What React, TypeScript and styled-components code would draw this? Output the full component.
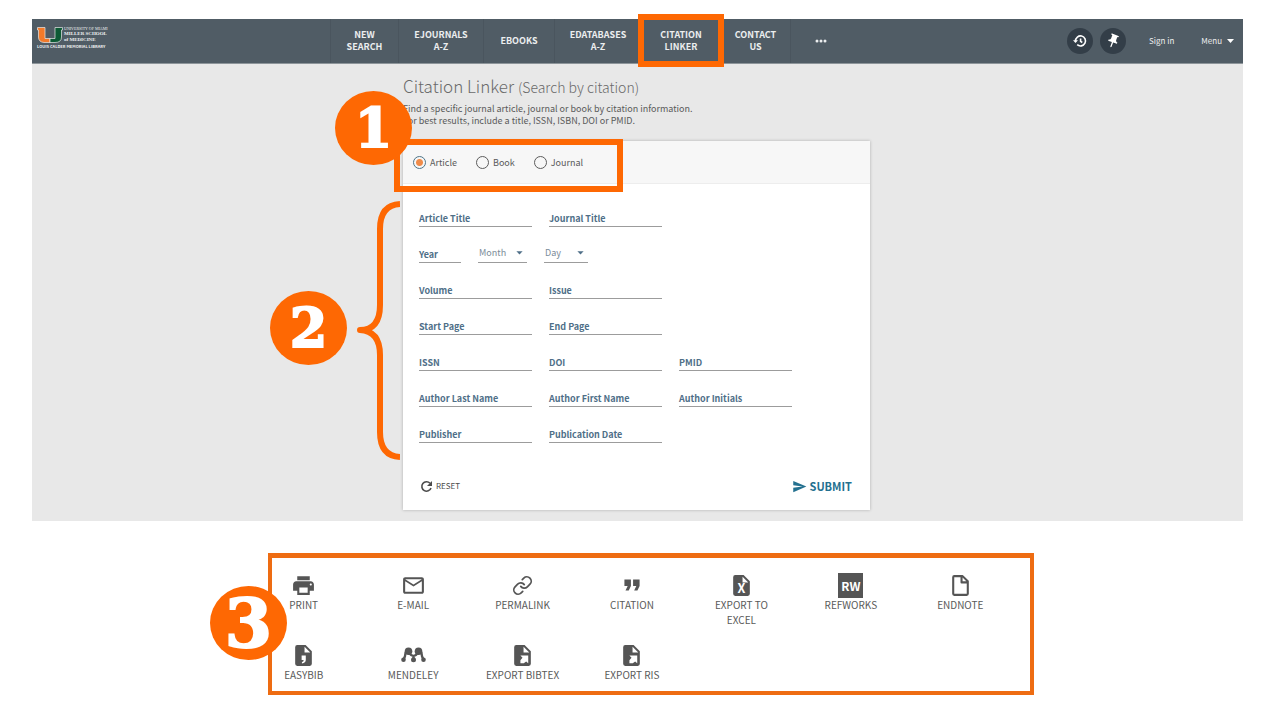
import React from "react";
import styled, { createGlobalStyle } from "styled-components";
import { Link as ChainLink } from "lucide-react";
import {
  MdArrowDropDown,
  MdFormatQuote,
  MdMailOutline,
  MdPrint,
  MdPushPin,
  MdSend,
} from "react-icons/md";

const ORANGE = "#fe6803";

const GlobalStyle = createGlobalStyle`
  * { box-sizing: border-box; }
  body {
    margin: 0;
    background: #fff;
    font-family: "Noto Sans CJK SC", "Open Sans", sans-serif;
    color: #5a5a5a;
  }
  button, input, select { font-family: inherit; border: 0; padding: 0; background: none; border-radius: 0; }
  svg { display: block; }
`;

const Page = styled.div`
  padding: 19px 31px 0 32px;
`;

const Screen = styled.div`
  background: #e8e8e8;
  padding-bottom: 11px;
`;

const Header = styled.header`
  display: flex;
  height: 45px;
  background: #505c65;
  border-bottom: 1px solid #8d959a;
`;

const Logo = styled.a`
  display: flex;
  flex-direction: column;
  width: 298px;
  padding: 8px 0 0 5px;
  color: #eef0f1;
  text-decoration: none;
`;

const LogoTop = styled.span`
  display: flex;
  gap: 1px;
`;

const LogoWords = styled.span`
  display: flex;
  flex-direction: column;
  font-family: "Liberation Serif", serif;
  white-space: nowrap;
`;

const LogoLine = styled.span<{ $size: number; $line: number }>`
  font-size: ${(p) => p.$size}px;
  line-height: ${(p) => p.$line}px;
`;

const LogoLibrary = styled.span`
  font-size: 4px;
  font-weight: 700;
  line-height: 6px;
  white-space: nowrap;
`;

const Nav = styled.nav`
  display: flex;
  border-left: 1px solid #4a555e;
`;

const NavLink = styled.a<{ $width: number }>`
  position: relative;
  display: flex;
  align-items: center;
  justify-content: center;
  width: ${(p) => p.$width}px;
  border-right: 1px solid #4a555e;
  color: #eceeef;
  font-size: 9px;
  font-weight: 700;
  line-height: 12px;
  text-align: center;
  text-decoration: none;
  white-space: pre-line;

  &:last-child { border-right: 0; }
`;

const NavHighlight = styled.span`
  position: absolute;
  inset: -5px -4px -4px -4px;
  border: 6px solid ${ORANGE};
  z-index: 1;
`;

const Account = styled.div`
  display: flex;
  align-items: center;
  margin-left: auto;
  padding-right: 9px;
`;

const RoundButton = styled.button`
  display: flex;
  align-items: center;
  justify-content: center;
  width: 26px;
  height: 26px;
  margin-right: 7px;
  border-radius: 50%;
  background: #333e48;
  color: #fff;
`;

const AccountButton = styled.button`
  display: flex;
  align-items: center;
  gap: 5px;
  margin-left: 16px;
  color: #eceeef;
  font-size: 8px;
  line-height: 12px;

  & + & { margin-left: 27px; }
`;

const Main = styled.main`
  width: 469px;
  max-width: 100%;
  margin: 0 auto;
  padding-right: 2px;
`;

const Title = styled.h1`
  margin: 0;
  padding-top: 10px;
  color: #6a6a6a;
  font-size: 17px;
  font-weight: 300;
  line-height: 24px;

  small { font-size: 14px; }
`;

const Intro = styled.p`
  margin: 4px 0 14px;
  font-size: 9px;
  line-height: 12px;
`;

const Card = styled.form`
  position: relative;
  background: #fff;
  box-shadow: 0 0 3px rgba(0, 0, 0, 0.25);
`;

const Types = styled.div`
  display: flex;
  align-items: center;
  gap: 19px;
  height: 43px;
  padding: 1px 0 0 10px;
  background: #f7f7f7;
  border-bottom: 1px solid #ededed;
`;

const TypeOption = styled.label`
  display: flex;
  align-items: center;
  gap: 4px;
  font-size: 9px;
  line-height: 12px;
`;

const Radio = styled.input`
  appearance: none;
  width: 13px;
  height: 13px;
  margin: 0;
  border: 1px solid #5c5c5c;
  border-radius: 50%;

  &:checked {
    border-color: #4d7488;
    background: radial-gradient(circle, #f08c4a 0 3px, transparent 4px);
  }
`;

const Rows = styled.div`
  display: flex;
  flex-direction: column;
  gap: 16px;
  padding: 23px 16px 0;
`;

const Row = styled.div`
  display: flex;
  gap: 17px;
`;

const Field = styled.div<{ $width?: number }>`
  display: grid;
  width: ${(p) => p.$width ?? 113}px;
  height: 20px;
  border-bottom: 1px solid #9c9c9c;

  & > * { grid-area: 1 / 1; min-width: 0; }
`;

const FieldLabel = styled.label`
  color: #4f6f88;
  font-size: 9px;
  font-weight: 700;
  line-height: 24px;
  white-space: nowrap;
`;

const TextInput = styled.input`
  width: 100%;
  font-size: 9px;
  outline: 0;
`;

const Select = styled.select`
  appearance: none;
  width: 100%;
  height: 20px;
  padding-left: 1px;
  color: #7b8b99;
  font-size: 9px;
  line-height: 20px;
`;

const Caret = styled(MdArrowDropDown)`
  justify-self: end;
  margin-top: 2px;
  color: #4f6f88;
  pointer-events: none;
`;

const Actions = styled.div`
  display: flex;
  align-items: center;
  justify-content: space-between;
  padding: 35px 18px 16px 17px;
`;

const ActionButton = styled.button<{ $primary?: boolean }>`
  display: flex;
  align-items: center;
  gap: 3px;
  color: ${(p) => (p.$primary ? "#23708f" : "#4c4c4c")};
  font-size: ${(p) => (p.$primary ? 11 : 8)}px;
  font-weight: ${(p) => (p.$primary ? 700 : 400)};
  line-height: 16px;
`;

const TypesHighlight = styled.div`
  position: absolute;
  left: -9px;
  top: -2px;
  width: 229px;
  height: 53px;
  border: 6px solid ${ORANGE};
  pointer-events: none;
`;

const Brace = styled.svg`
  position: absolute;
  left: -46px;
  top: 59px;
`;

const Step = styled.div<{ $left: number; $top: number; $size?: number }>`
  position: absolute;
  left: ${(p) => p.$left}px;
  top: ${(p) => p.$top}px;
  display: flex;
  align-items: center;
  justify-content: center;
  width: 77px;
  height: 74px;
  border-radius: 50%;
  background: ${ORANGE};
  color: #fff;
  font: bold ${(p) => p.$size ?? 54}px/74px "DejaVu Serif", serif;
  -webkit-text-stroke: 2px #fff;
`;

const ToolsArea = styled.section`
  display: flex;
  justify-content: center;
  padding: 32px 0 0 28px;
`;

const ToolsBox = styled.div`
  position: relative;
  width: 766px;
  border: 4px solid #ee6c12;
  border-top-width: 5px;
`;

const Tools = styled.div`
  display: grid;
  grid-template-columns: repeat(7, 1fr);
  grid-auto-rows: 70px 48px;
  margin: 15px 15px 0 -23px;
`;

const Tool = styled.button`
  display: flex;
  flex-direction: column;
  align-items: center;
  justify-content: flex-start;
  padding: 0 16px;
  color: #5a5a5a;
  font-size: 10px;
  line-height: 15px;
`;

const ToolIcon = styled.span`
  display: flex;
  align-items: center;
  justify-content: center;
  height: 24px;
  color: #555;
`;

const RefWorks = styled.span`
  width: 25px;
  height: 25px;
  background: #555;
  color: #fff;
  font-size: 12px;
  font-weight: 700;
  line-height: 25px;
`;

function FileIcon({ children }: { children: React.ReactNode }) {
  return (
    <svg width="25" height="25" viewBox="0 0 24 24" fill="currentColor">
      <path d="M14 2H6a2 2 0 0 0-2 2v16a2 2 0 0 0 2 2h12a2 2 0 0 0 2-2V8zm-1 7V3.500L18.500 9z" />
      {children}
    </svg>
  );
}

const ExportIcon = () => (
  <FileIcon>
    <path fill="#fff" d="M10 12H17.500V19.500L15.500 17.700L13.200 19.500H10V16.500L12 14.200z" />
  </FileIcon>
);

const EndNoteIcon = () => (
  <svg width="25" height="25" viewBox="0 0 24 24" fill="none" stroke="currentColor" strokeWidth="2" strokeLinejoin="round">
    <path d="M14 3H6Q5 3 5 4V20Q5 21 6 21H18Q19 21 19 20V8zM13 3V9H19" />
  </svg>
);

const MendeleyIcon = () => (
  <svg width="25" height="16" viewBox="0 0 25 16" fill="currentColor">
    <circle cx="7.500" cy="4.300" r="3.800" />
    <circle cx="17.500" cy="4.300" r="3.800" />
    <circle cx="2.500" cy="12.700" r="2.300" />
    <circle cx="12.500" cy="12.700" r="2.500" />
    <circle cx="22.500" cy="12.700" r="2.300" />
    <path
      d="M2.500 12.500Q4.300 10 4.700 5M12.500 12.500V9.500M22.500 12.500Q20.700 10 20.300 5M8.500 6.500Q12.500 11.500 16.500 6.500"
      fill="none"
      stroke="currentColor"
      strokeWidth="2.400"
    />
  </svg>
);

const MoreIcon = () => (
  <svg width="12" height="4" viewBox="0 0 12 4" fill="currentColor">
    <circle cx="2" cy="2" r="1.500" />
    <circle cx="6" cy="2" r="1.500" />
    <circle cx="10" cy="2" r="1.500" />
  </svg>
);

const HistoryIcon = () => (
  <svg width="14" height="14" viewBox="0 0 14 14" fill="none" stroke="currentColor" strokeWidth="1.600">
    <path d="M2.500 7A5 5 0 1 1 4.200 10.700M7.600 4.500V7.400L9.300 8.500" />
    <path d="M0 6.300H5L2.500 9z" fill="currentColor" stroke="none" />
  </svg>
);

const ResetIcon = () => (
  <svg width="13" height="13" viewBox="0 0 13 13" fill="none" stroke="currentColor" strokeWidth="1.600">
    <path d="M10 3.300A4.700 4.700 0 1 0 11 8" />
    <path d="M12 1V6H7z" fill="currentColor" stroke="none" />
  </svg>
);

const navItems = [
  { text: "NEW\nSEARCH", width: 68 },
  { text: "EJOURNALS\nA-Z", width: 85 },
  { text: "EBOOKS", width: 71 },
  { text: "EDATABASES\nA-Z", width: 87 },
  { text: "CITATION\nLINKER", width: 79, highlighted: true },
  { text: "CONTACT\nUS", width: 70 },
];

const rowsBelowDate = [
  ["Volume", "Issue"],
  ["Start Page", "End Page"],
  ["ISSN", "DOI", "PMID"],
  ["Author Last Name", "Author First Name", "Author Initials"],
  ["Publisher", "Publication Date"],
];

const tools = [
  { label: "PRINT", icon: <MdPrint size={25} /> },
  { label: "E-MAIL", icon: <MdMailOutline size={25} /> },
  { label: "PERMALINK", icon: <ChainLink size={21} strokeWidth={2} /> },
  { label: "CITATION", icon: <MdFormatQuote size={26} /> },
  {
    label: "EXPORT TO EXCEL",
    icon: (
      <FileIcon>
        <text x="12" y="19.500" fill="#fff" fontSize="12" fontWeight="700" textAnchor="middle">
          X
        </text>
      </FileIcon>
    ),
  },
  { label: "REFWORKS", icon: <RefWorks>RW</RefWorks> },
  { label: "ENDNOTE", icon: <EndNoteIcon /> },
  {
    label: "EASYBIB",
    icon: (
      <FileIcon>
        <path fill="#fff" d="M10.200 12h4v4.300q0 2.700-3.700 3.300v-1.300q1.600-.500 1.700-2.100h-2z" />
      </FileIcon>
    ),
  },
  { label: "MENDELEY", icon: <MendeleyIcon /> },
  { label: "EXPORT BIBTEX", icon: <ExportIcon /> },
  { label: "EXPORT RIS", icon: <ExportIcon /> },
];

function LabeledField({ label, width }: { label: string; width?: number }) {
  const id = label.toLowerCase().replace(/ /g, "-");
  return (
    <Field $width={width}>
      <FieldLabel htmlFor={id}>{label}</FieldLabel>
      <TextInput id={id} type="text" />
    </Field>
  );
}

function DateSelect({ label, width }: { label: string; width: number }) {
  return (
    <Field $width={width}>
      <Select aria-label={label}>
        <option>{label}</option>
      </Select>
      <Caret size={15} />
    </Field>
  );
}

export default function App() {
  return (
    <>
      <GlobalStyle />
      <Page>
        <Screen>
          <Header>
            <Logo href="#">
              <LogoTop>
                <svg width="26" height="16" viewBox="0 0 26 16">
                  <path d="M.5.5H8V11.500H13V15.500H7Q1.500 15 1.500 10V3H.5z" fill="#f27a2a" stroke="#e8eaea" strokeWidth=".7" />
                  <path d="M18 .5H25.500V3H24.500V10Q24.500 15.500 18 15.500H13V11.500H18z" fill="#0d5a35" stroke="#e8eaea" strokeWidth=".7" />
                </svg>
                <LogoWords>
                  <LogoLine $size={4} $line={4}>UNIVERSITY OF MIAMI</LogoLine>
                  <LogoLine as="strong" $size={5} $line={6}>MILLER SCHOOL</LogoLine>
                  <LogoLine as="strong" $size={5} $line={6}>of MEDICINE</LogoLine>
                </LogoWords>
              </LogoTop>
              <LogoLibrary>LOUIS CALDER MEMORIAL LIBRARY</LogoLibrary>
            </Logo>
            <Nav>
              {navItems.map((item) => (
                <NavLink key={item.text} href="#" $width={item.width}>
                  {item.text}
                  {item.highlighted && <NavHighlight />}
                </NavLink>
              ))}
              <NavLink href="#" $width={60} aria-label="More">
                <MoreIcon />
              </NavLink>
            </Nav>
            <Account>
              <RoundButton aria-label="Search history">
                <HistoryIcon />
              </RoundButton>
              <RoundButton aria-label="Saved items">
                <MdPushPin size={16} transform="rotate(20)" />
              </RoundButton>
              <AccountButton>Sign in</AccountButton>
              <AccountButton>
                Menu
                <svg width="7" height="4" viewBox="0 0 7 4">
                  <path d="M0 0H7L3.500 4z" fill="#fff" />
                </svg>
              </AccountButton>
            </Account>
          </Header>
          <Main>
            <Title>
              Citation Linker <small>(Search by citation)</small>
            </Title>
            <Intro>
              Find a specific journal article, journal or book by citation information.
              <br />
              For best results, include a title, ISSN, ISBN, DOI or PMID.
            </Intro>
            <Card onSubmit={(e) => e.preventDefault()}>
              <Types>
                {["Article", "Book", "Journal"].map((type, i) => (
                  <TypeOption key={type}>
                    <Radio type="radio" name="type" defaultChecked={i === 0} />
                    {type}
                  </TypeOption>
                ))}
              </Types>
              <Rows>
                <Row>
                  <LabeledField label="Article Title" />
                  <LabeledField label="Journal Title" />
                </Row>
                <Row>
                  <LabeledField label="Year" width={42} />
                  <DateSelect label="Month" width={49} />
                  <DateSelect label="Day" width={44} />
                </Row>
                {rowsBelowDate.map((labels) => (
                  <Row key={labels[0]}>
                    {labels.map((label) => (
                      <LabeledField key={label} label={label} />
                    ))}
                  </Row>
                ))}
              </Rows>
              <Actions>
                <ActionButton type="reset">
                  <ResetIcon />
                  RESET
                </ActionButton>
                <ActionButton type="submit" $primary>
                  <MdSend size={15} />
                  SUBMIT
                </ActionButton>
              </Actions>
              <TypesHighlight />
              <Brace width="43" height="261" viewBox="0 0 43 261" fill="none" stroke={ORANGE} strokeWidth="6">
                <path d="M43 4Q23 5 23 29V105Q23 130 3 130Q23 131 23 155V232Q23 256 43 257" strokeLinejoin="round" />
              </Brace>
              <Step $left={-68} $top={-50}>1</Step>
              <Step $left={-133} $top={150}>2</Step>
            </Card>
          </Main>
        </Screen>
      </Page>
      <ToolsArea>
        <ToolsBox>
          <Tools>
            {tools.map((tool) => (
              <Tool key={tool.label}>
                <ToolIcon>{tool.icon}</ToolIcon>
                {tool.label}
              </Tool>
            ))}
          </Tools>
          <Step $left={-62} $top={28} $size={68}>3</Step>
        </ToolsBox>
      </ToolsArea>
    </>
  );
}
